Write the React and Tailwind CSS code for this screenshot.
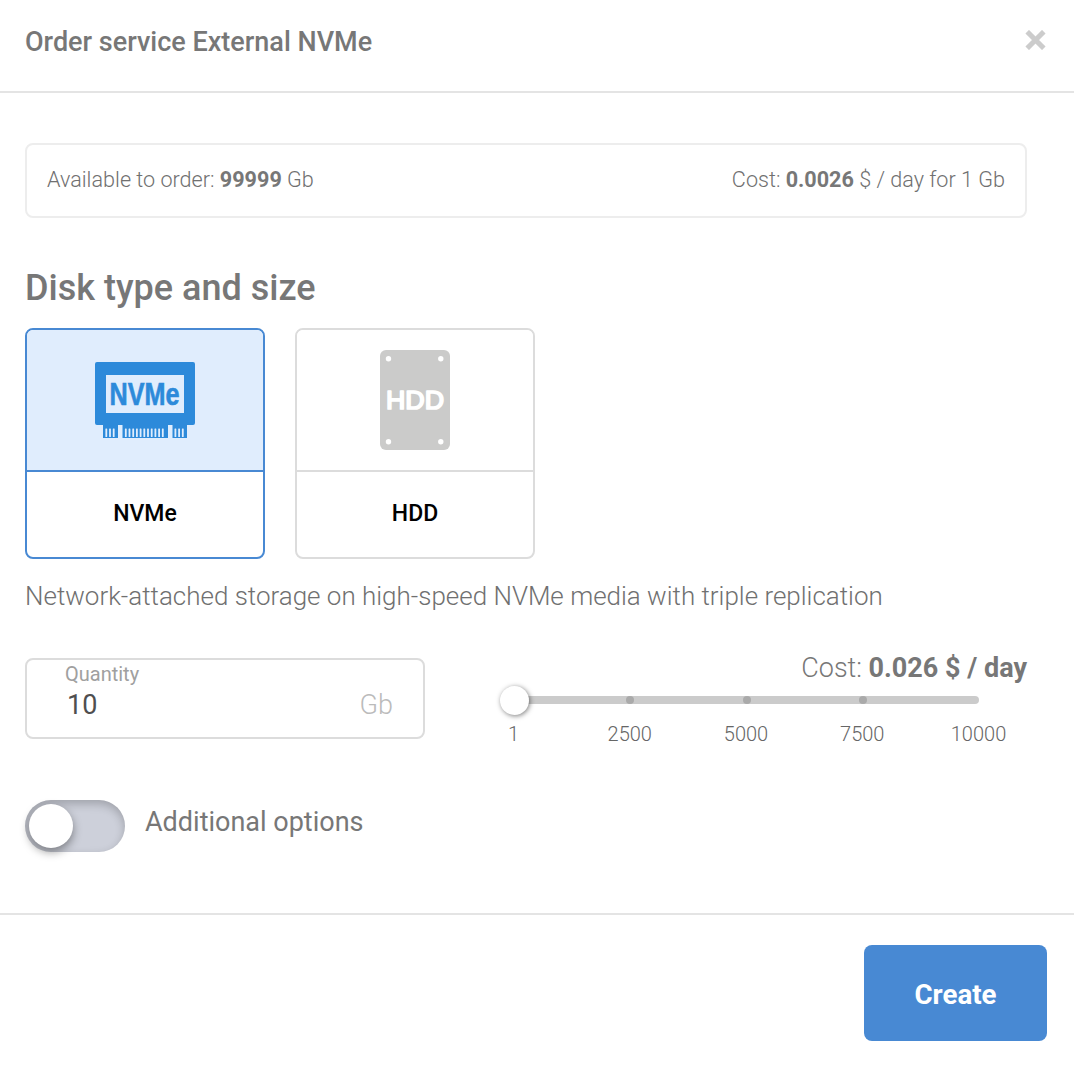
import { useState } from 'react';

const SLIDER_MARKS = ['1', '2500', '5000', '7500', '10000'];

const LEFT_PINS = [106.3, 110, 113.7];
const MIDDLE_PINS = [125.8, 129.5, 133.2, 136.9, 140.6, 144.3, 148, 151.7, 155.4, 159.1, 162.8];
const RIGHT_PINS = [175.4, 179.1, 182.8];

const NvmeIcon = () => (
  <svg width="100" height="76" viewBox="95 362 100 76">
    <path
      fill="#2d8ada"
      fillRule="evenodd"
      d="M97 362h96a2 2 0 0 1 2 2v59a2 2 0 0 1-2 2h-6v13h-14.500v-13h-4.500v13h-45.500v-13h-4.500v13h-15v-13h-6a2 2 0 0 1-2-2v-59a2 2 0 0 1 2-2zM106 375v38h78v-38z"
    />
    {[...LEFT_PINS, ...MIDDLE_PINS, ...RIGHT_PINS].map((x) => (
      <rect key={x} x={x - 0.9} y="428.500" width="1.800" height="8.500" rx="0.500" fill="#e0edfd" />
    ))}
    <text
      x="109.500"
      y="404.500"
      textLength="70"
      lengthAdjust="spacingAndGlyphs"
      fill="#2d8ada"
      stroke="#2d8ada"
      strokeWidth="0.6"
      className="font-['Liberation_Sans_Narrow','Liberation_Sans',sans-serif] text-[31px] font-bold"
    >
      NVMe
    </text>
  </svg>
);

const HddIcon = () => (
  <svg width="70" height="100" viewBox="380 350 70 100">
    <rect x="380" y="350" width="70" height="100" rx="6" fill="#cbcbca" />
    {[[388.5, 358.7], [440.8, 358.7], [388.5, 441.7], [440.8, 441.7]].map(([cx, cy]) => (
      <circle key={`${cx}-${cy}`} cx={cx} cy={cy} r="2.700" fill="#fff" />
    ))}
    <text
      x="386"
      y="409"
      textLength="58"
      lengthAdjust="spacingAndGlyphs"
      fill="#fff"
      stroke="#fff"
      strokeWidth="1.7"
      strokeLinejoin="round"
      className="font-['Liberation_Sans',sans-serif] text-[25px]"
    >
      HDD
    </text>
  </svg>
);

const DISKS = [
  { id: 'nvme', label: 'NVMe', Icon: NvmeIcon },
  { id: 'hdd', label: 'HDD', Icon: HddIcon },
];

const DiskCard = ({ disk, active, onSelect }) => {
  const { label, Icon } = disk;
  return (
    <button
      type="button"
      onClick={onSelect}
      className={`flex h-[231px] w-60 flex-col overflow-hidden rounded-lg border-2 ${active ? 'border-[#4889d3]' : 'border-[#dcdcdc]'}`}
    >
      <span
        className={`flex h-[142px] w-full shrink-0 items-center justify-center border-b-2 ${active ? 'border-[#4889d3] bg-[#e0edfd]' : 'border-[#dcdcdc] bg-white'}`}
      >
        <Icon />
      </span>
      <span className="flex h-[84px] w-full items-center justify-center text-[23px] font-medium text-black">{label}</span>
    </button>
  );
};

const App = () => {
  const [disk, setDisk] = useState('nvme');

  return (
    <div className="flex h-[1068px] w-[1074px] flex-col bg-white font-['Roboto',sans-serif] text-[#777]">
      <header className="flex h-[93px] shrink-0 items-start justify-between border-b-2 border-[#e4e4e4] pt-[26px] pr-7 pl-[25px]">
        <h1 className="text-[27px] leading-8 font-medium">Order service External NVMe</h1>
        <button type="button" aria-label="Close" className="mt-1">
          <svg width="21" height="20" viewBox="0 0 21 20" stroke="#ccc" strokeWidth="5">
            <path d="M2.200 1.700l16.600 16.600M18.800 1.700L2.200 18.300" />
          </svg>
        </button>
      </header>

      <main className="flex h-[820px] shrink-0 flex-col pt-[50px] pr-[47px] pl-[25px]">
        <div className="flex h-[75px] items-center justify-between rounded-lg border-2 border-[#ededed] px-5 text-[21.6px] font-light text-[#707070]">
          <p>Available to order: <b className="font-bold text-[#777]">99999</b> Gb</p>
          <p>Cost: <b className="font-bold text-[#777]">0.0026</b> $ / day for 1 Gb</p>
        </div>

        <h2 className="mt-12 text-[36px] leading-[44px] font-medium">Disk type and size</h2>

        <div className="mt-[18px] flex gap-[30px]">
          {DISKS.map((item) => (
            <DiskCard key={item.id} disk={item} active={item.id === disk} onSelect={() => setDisk(item.id)} />
          ))}
        </div>

        <p className="mt-[21px] text-[25.97px] leading-8 font-light text-[#707070]">
          Network-attached storage on high-speed NVMe media with triple replication
        </p>

        <div className="mt-[46px] flex items-start justify-between">
          <label className="flex h-[81px] w-[400px] flex-col rounded-lg border-2 border-[#dcdcdc] pr-[30px] pl-[38px]">
            <span className="mt-0.5 text-[20px] leading-6 text-[#a0a0a0]">Quantity</span>
            <span className="mt-[3px] flex items-center justify-between pl-0.5 text-[27px] leading-8">
              <span className="text-[#4f4f4f]">10</span>
              <span className="font-light text-[#bbb]">Gb</span>
            </span>
          </label>

          <div className="-mt-1.5 flex w-[513px] flex-col">
            <p className="text-right text-[27px] leading-8 font-light">
              Cost: <b className="font-bold">0.026 $ / day</b>
            </p>
            <div className="relative mt-3 mr-12 flex h-2 items-center justify-between rounded-full bg-[#cbcbcb]">
              {SLIDER_MARKS.map((mark, i) => (
                <span key={mark} className="flex w-0 justify-center">
                  {i > 0 && i < 4 && <i className="size-2 shrink-0 rounded-full bg-[#aaa]" />}
                </span>
              ))}
              <span className="absolute -top-[10.5px] -left-[14.5px] size-[29px] rounded-full bg-white shadow-[1px_1px_5px_rgba(0,0,0,0.5)]" />
            </div>
            <div className="mt-[18px] mr-[48.5px] -ml-[0.5px] flex justify-between text-[20px] leading-6 font-light text-[#666]">
              {SLIDER_MARKS.map((mark) => (
                <span key={mark} className="flex w-0 justify-center">{mark}</span>
              ))}
            </div>
          </div>
        </div>

        <div className="mt-[54px] flex items-start gap-5">
          <span className="flex h-[52px] w-[100px] items-center rounded-full bg-[#cdd0da] px-1 shadow-[inset_0_4px_10px_rgba(0,0,0,0.22)]">
            <span className="size-11 rounded-full bg-white shadow-[0_4px_10px_rgba(0,0,0,0.4)]" />
          </span>
          <span className="mt-1.5 text-[27px] leading-8">Additional options</span>
        </div>
      </main>

      <footer className="flex flex-1 items-start justify-end border-t-2 border-[#e4e4e4] pt-[30px] pr-[27px]">
        <button type="button" className="h-24 w-[183px] rounded-lg bg-[#4889d3] pt-[3px] text-[27.7px] font-bold text-white">
          Create
        </button>
      </footer>
    </div>
  );
};

export default App;
